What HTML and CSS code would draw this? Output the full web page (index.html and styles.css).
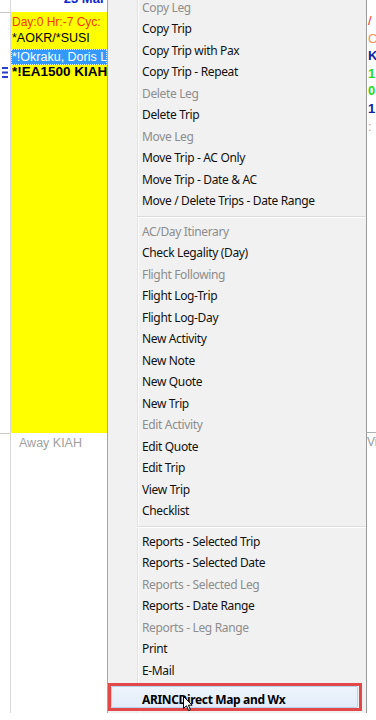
FILE: index.html
```html
<html>
	<head>
		<title>Trip Calendar</title>
		<link rel="stylesheet" href="styles.css">
	</head>
	<body>
		<div class="screen">
			<div class="gutter">
				<div class="gutter-head"></div>
				<div class="gutter-body">
					<svg class="gutter-mark" width="8" height="11" viewBox="0 0 8 11">
						<rect x="1" y="0" width="6" height="2" fill="#2b3fc4"/>
						<rect x="1" y="4.5" width="6" height="2" fill="#2b3fc4"/>
						<rect x="1" y="9" width="6" height="2" fill="#2b3fc4"/>
					</svg>
				</div>
			</div>
			<div class="day">
				<div class="day-head"><span>23 Mar</span></div>
				<div class="day-body">
					<div class="line line-red">Day:0 Hr:-7 Cyc:</div>
					<div class="line">*AOKR/*SUSI</div>
					<div class="line line-selected">*!Okraku, Doris L</div>
					<div class="line line-bold">*!EA1500 KIAH</div>
				</div>
				<div class="day-away">Away KIAH</div>
			</div>
			<div class="menu">
				<div class="item disabled first">Copy Leg</div>
				<div class="item">Copy Trip</div>
				<div class="item">Copy Trip with Pax</div>
				<div class="item">Copy Trip - Repeat</div>
				<div class="item disabled">Delete Leg</div>
				<div class="item">Delete Trip</div>
				<div class="item disabled">Move Leg</div>
				<div class="item">Move Trip - AC Only</div>
				<div class="item">Move Trip - Date &amp; AC</div>
				<div class="item">Move / Delete Trips - Date Range</div>
				<div class="separator"></div>
				<div class="item disabled">AC/Day Itinerary</div>
				<div class="item">Check Legality (Day)</div>
				<div class="item disabled">Flight Following</div>
				<div class="item">Flight Log-Trip</div>
				<div class="item">Flight Log-Day</div>
				<div class="item">New Activity</div>
				<div class="item">New Note</div>
				<div class="item">New Quote</div>
				<div class="item">New Trip</div>
				<div class="item disabled">Edit Activity</div>
				<div class="item">Edit Quote</div>
				<div class="item">Edit Trip</div>
				<div class="item">View Trip</div>
				<div class="item">Checklist</div>
				<div class="separator"></div>
				<div class="item">Reports - Selected Trip</div>
				<div class="item">Reports - Selected Date</div>
				<div class="item disabled">Reports - Selected Leg</div>
				<div class="item">Reports - Date Range</div>
				<div class="item disabled">Reports - Leg Range</div>
				<div class="item">Print</div>
				<div class="item">E-Mail</div>
				<div class="callout">
					<div class="item hover">ARINCDirect Map and Wx
						<svg class="cursor" width="11" height="16" viewBox="0 0 11 16">
							<path d="M0.5 0.5 L0.5 12.5 L3.5 9.8 L5.6 14.5 L7.4 13.7 L5.4 9.2 L9.2 9.2 Z" fill="#fff" stroke="#000" stroke-width="1"/>
						</svg>
					</div>
				</div>
			</div>
			<div class="next">
				<div class="next-body">
					<div class="nline c-red">/</div>
					<div class="nline c-orange">C</div>
					<div class="nline c-navy">K</div>
					<div class="nline c-green">1</div>
					<div class="nline c-green">0</div>
					<div class="nline c-navy">1</div>
					<div class="nline c-orange">:</div>
				</div>
				<div class="next-away">Vi</div>
			</div>
		</div>
	</body>
</html>
```
FILE: styles.css
```css
* {
	margin: 0;
	padding: 0;
	box-sizing: border-box;
}
body {
	background: #fff;
	font-family: "Liberation Sans", Arial, sans-serif;
}
.screen {
	display: flex;
	height: 713px;
	overflow: hidden;
}
/* left time gutter */
.gutter {
	width: 11px;
	border-right: 1px solid #d9d9d9;
	flex-shrink: 0;
}
.gutter-head {
	height: 13px;
	border-bottom: 1px solid #c8c8c8;
}
.gutter-body {
	height: 421px;
	border-bottom: 1px solid #c8c8c8;
	padding: 54px 0 0 1px;
}
.gutter-mark {
	display: block;
}
/* day column */
.day {
	width: 97px;
	border-right: 1px solid #a6a6a6;
	flex-shrink: 0;
	display: flex;
	flex-direction: column;
}
.day-head {
	height: 12px;
	overflow: hidden;
	text-align: right;
	padding-right: 2px;
}
.day-head span {
	display: block;
	margin-top: -9px;
	font-weight: bold;
	font-size: 13px;
	color: #1028c8;
}
.day-body {
	height: 421px;
	background: #ffff00;
	padding-top: 2px;
	overflow: hidden;
}
.line {
	font-size: 12.5px;
	line-height: 16px;
	white-space: nowrap;
	overflow: hidden;
	padding-left: 1px;
	color: #000;
}
.line-red {
	font-size: 12px;
	color: #f23a0c;
}
.line-selected {
	margin-top: 3px;
	line-height: 14px;
	background: #3399ff;
	color: #fff;
	border: 1px dotted #d8ecff;
	padding-left: 0;
}
.line-bold {
	font-size: 13.5px;
	font-weight: bold;
	line-height: 14px;
}
.day-away {
	flex: 1;
	padding: 2px 0 0 8px;
	font-size: 12.5px;
	line-height: 16px;
	color: #a0a0a0;
}
/* context menu */
.menu {
	width: 259px;
	flex-shrink: 0;
	border-right: 1px solid #9a9a9a;
	background: linear-gradient(to right, #f1f1f1 0, #f1f1f1 29px, #e3e3e3 29px, #e3e3e3 30px, #fbfbfb 30px, #fbfbfb 31px, #f1f1f1 31px);
	font-family: "Noto Sans", "Open Sans", sans-serif;
	font-size: 12px;
	letter-spacing: -0.35px;
	color: #111;
	overflow: hidden;
}
.item {
	height: 21.5px;
	line-height: 21.5px;
	padding-left: 34px;
	white-space: nowrap;
}
.item.first {
	margin-top: -3.25px;
}
.item.disabled {
	color: #8d8d8d;
}
.separator {
	height: 9px;
	margin-left: 29px;
	padding-top: 4px;
}
.separator::after {
	content: "";
	display: block;
	border-top: 1px solid #dcdcdc;
	border-bottom: 1px solid #fff;
}
.callout {
	margin: 1.5px 4px 0 0;
	height: 28px;
	border: 3px solid #e24848;
	background: #f1f1f1;
}
.item.hover {
	position: relative;
	height: 22px;
	line-height: 20px;
	padding-top: 3px;
	padding-left: 30px;
	margin-right: 1px;
	border: 1px solid #b8d2ef;
	border-radius: 2px;
	background: linear-gradient(#eef4fc, #e2ecf9);
	font-weight: bold;
	color: #000;
}
.cursor {
	position: absolute;
	left: 71px;
	top: 9px;
}
/* next day column, mostly hidden by the menu */
.next {
	flex: 1;
	overflow: hidden;
	font-size: 13px;
}
.next-body {
	height: 421px;
	margin-top: 12px;
	border-bottom: 1px solid #b0b0b0;
}
.nline {
	line-height: 17.6px;
	padding-left: 1px;
}
.c-red { color: #f03030; }
.c-orange { color: #f59060; }
.c-navy { color: #1020a0; font-weight: bold; }
.c-green { color: #22dd22; font-weight: bold; }
.next-away {
	padding-top: 2px;
	font-size: 12px;
	color: #999;
}
```
